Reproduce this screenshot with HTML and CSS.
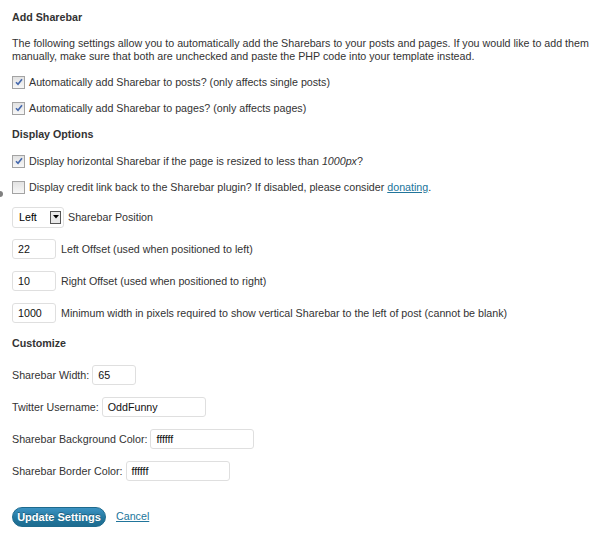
FILE: index.html
```html
<!DOCTYPE html>
<html>
<head>
<meta charset="utf-8">
<link rel="stylesheet" href="styles.css">
</head>
<body>
<div class="page">
  <div class="title">Add Sharebar</div>
  <p class="intro">The following settings allow you to automatically add the Sharebars to your posts and pages. If you would like to add them manually, make sure that both are unchecked and paste the PHP code into your template instead.</p>
  <div class="check-row first">
    <span class="cb"><svg viewBox="0 0 8 8" width="8" height="8"><path d="M1 4.2 L3 6.3 L7 1.2" fill="none" stroke="#4468ad" stroke-width="1.6"/></svg></span>
    <span>Automatically add Sharebar to posts? (only affects single posts)</span>
  </div>
  <div class="check-row">
    <span class="cb"><svg viewBox="0 0 8 8" width="8" height="8"><path d="M1 4.2 L3 6.3 L7 1.2" fill="none" stroke="#4468ad" stroke-width="1.6"/></svg></span>
    <span>Automatically add Sharebar to pages? (only affects pages)</span>
  </div>

  <div class="title second">Display Options</div>
  <div class="check-row tight">
    <span class="cb"><svg viewBox="0 0 8 8" width="8" height="8"><path d="M1 4.2 L3 6.3 L7 1.2" fill="none" stroke="#4468ad" stroke-width="1.6"/></svg></span>
    <span>Display horizontal Sharebar if the page is resized to less than <em>1000px</em>?</span>
  </div>
  <div class="check-row">
    <span class="edge-dot"></span>
    <span class="cb"></span>
    <span>Display credit link back to the Sharebar plugin? If disabled, please consider <a href="#">donating</a>.</span>
  </div>

  <div class="field-row select-row">
    <span class="select"><span class="select-val">Left</span><span class="select-btn"><svg viewBox="0 0 6 4" width="6" height="4"><path d="M0 0 H6 L3 3.5 Z" fill="#000"/></svg></span></span>
    <span>Sharebar Position</span>
  </div>
  <div class="field-row">
    <span class="input small">22</span>
    <span>Left Offset (used when positioned to left)</span>
  </div>
  <div class="field-row">
    <span class="input small">10</span>
    <span>Right Offset (used when positioned to right)</span>
  </div>
  <div class="field-row">
    <span class="input small">1000</span>
    <span>Minimum width in pixels required to show vertical Sharebar to the left of post (cannot be blank)</span>
  </div>

  <div class="title third">Customize</div>
  <div class="field-row label-first first-custom">
    <span>Sharebar Width:</span>
    <span class="input small">65</span>
  </div>
  <div class="field-row label-first">
    <span>Twitter Username:</span>
    <span class="input wide">OddFunny</span>
  </div>
  <div class="field-row label-first">
    <span>Sharebar Background Color:</span>
    <span class="input wide">ffffff</span>
  </div>
  <div class="field-row label-first">
    <span>Sharebar Border Color:</span>
    <span class="input wide">ffffff</span>
  </div>

  <div class="actions">
    <span class="button">Update Settings</span>
    <a href="#" class="cancel">Cancel</a>
  </div>
</div>
</body>
</html>
```

FILE: styles.css
```css
html, body {
  margin: 0;
  padding: 0;
  background: #fff;
}
body {
  font-family: "Liberation Sans", Arial, sans-serif;
  font-size: 10.7px;
  color: #333;
}
.page {
  padding: 9px 0 0 12px;
}
.title {
  font-weight: bold;
  height: 16px;
  line-height: 16px;
}
.title.second { margin-top: 5px; }
.title.third { margin-top: 6px; }
.intro {
  margin: 12px 0 0 0;
  line-height: 13px;
}
.check-row {
  display: flex;
  align-items: center;
  height: 26px;
}
.check-row.first { margin-top: 6px; }
.check-row.tight { margin-top: 6px; }
.cb {
  width: 11px;
  height: 11px;
  border: 1px solid #a3a3a3;
  background: linear-gradient(#e2e2e2, #f7f7f7);
  margin-right: 4px;
  display: flex;
  align-items: center;
  justify-content: center;
  flex: none;
}
.edge-dot {
  width: 3px;
  height: 6px;
  background: #808080;
  border-radius: 0 3px 3px 0;
  margin-left: -12px;
  margin-right: 9px;
  align-self: flex-start;
  margin-top: 17px;
}
em { font-style: italic; }
a {
  color: #21759b;
  text-decoration: underline;
}
.field-row {
  display: flex;
  align-items: center;
  height: 32px;
}
.select-row { margin-top: 1px; }
.select {
  width: 50px;
  height: 19px;
  border: 1px solid #dfdfdf;
  border-radius: 3px;
  display: flex;
  align-items: center;
  margin-right: 4px;
  color: #000;
}
.select-val {
  padding-left: 6px;
  width: 31px;
}
.select-btn {
  width: 9px;
  height: 11px;
  border: 1px solid #555;
  background: #e8e8e8;
  display: flex;
  align-items: center;
  justify-content: center;
}
.input {
  box-sizing: border-box;
  height: 20px;
  border: 1px solid #dfdfdf;
  border-radius: 3px;
  padding-left: 5px;
  display: flex;
  align-items: center;
  color: #111;
  font-size: 10.7px;
  flex: none;
}
.input.small {
  width: 44px;
  margin-right: 5px;
}
.label-first .input { margin-left: 3px; }
.input.wide { width: 104px; }
.first-custom { margin-top: 8px; }
.actions {
  display: flex;
  align-items: center;
  margin-top: 20px;
  height: 20px;
}
.button {
  box-sizing: border-box;
  height: 20px;
  width: 94px;
  border-radius: 10px;
  border: 1px solid #1e6a8d;
  background: linear-gradient(#3c93c3, #21759b 60%, #1d6c90);
  color: #fff;
  font-weight: bold;
  font-size: 11px;
  display: flex;
  align-items: center;
  justify-content: center;
  text-shadow: 0 -1px 0 rgba(0,0,0,0.3);
  margin-right: 10px;
}
.cancel {
  margin-top: -3px;
}
```
